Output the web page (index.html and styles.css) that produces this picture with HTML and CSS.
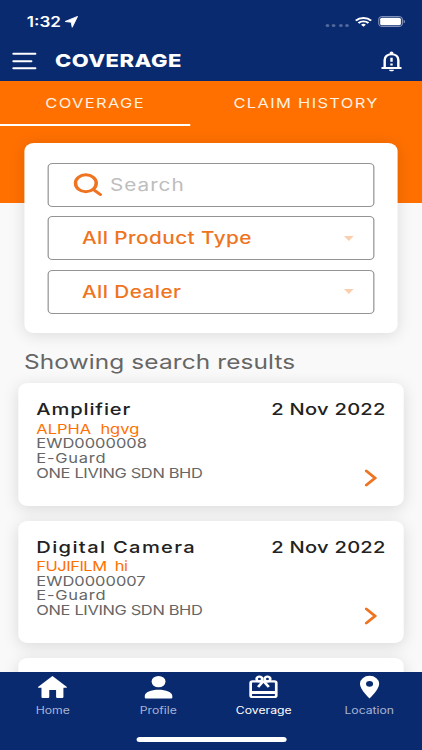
FILE: index.html
```html
<!DOCTYPE html>
<html lang="en">
<head>
  <meta charset="UTF-8">
  <meta name="viewport" content="width=device-width, initial-scale=1">
  <title>Coverage</title>
  <link rel="stylesheet" href="styles.css">
</head>
<body>
  <div class="screen">
    <header class="header">
      <div class="status">
        <span class="time">1:32</span>
        <svg class="arrow" width="11" height="12" viewBox="0 0 11 12"><path d="M10.6.4 6.2 11.3 5.4 6.2.4 5.5z" fill="#fff" stroke="#fff" stroke-width=".8" stroke-linejoin="round"/></svg>
        <span class="dots"><i></i><i></i><i></i><i></i></span>
        <svg class="wifi" width="14" height="10" viewBox="0 0 14 10" fill="none" stroke="#fff" stroke-width="1.9"><path d="M.7 3.6a9 9 0 0 1 12.6 0M2.9 6a6 6 0 0 1 8.2 0"/><path d="M7 9.8 5 7.7a3 3 0 0 1 4 0z" fill="#fff" stroke="none"/></svg>
        <svg class="battery" width="23" height="11" viewBox="0 0 23 11"><rect x=".5" y=".5" width="19.4" height="10" rx="3" fill="none" stroke="#7f8fb8"/><rect x="1.7" y="1.7" width="17" height="7.6" rx="1.6" fill="#fff"/><path d="M21 3.7c1.3.5 1.3 3.1 0 3.6z" fill="#9aa7c8"/></svg>
      </div>
      <div class="bar">
        <svg class="menu" width="20" height="18" viewBox="0 0 20 18" stroke="#fff" stroke-width="2" stroke-linecap="round"><path d="M1 1.8h18M1 9.200h14.6M1 16.200h18"/></svg>
        <h1>COVERAGE</h1>
        <svg class="bell" width="18" height="21" viewBox="0 0 18 21" fill="none" stroke="#fff" stroke-width="2"><path d="M3.4 16.6V9c0-3.6 2.4-5.8 5.6-5.8s5.6 2.200 5.6 5.8v7.6"/><path d="M.8 16.9h16.400" stroke-width="2"/><circle cx="9" cy="2" r="1.6" fill="#fff" stroke="none"/><path d="M7 18.7h4c0 2.1-4 2.1-4 0z" fill="#fff" stroke="none"/><path d="M9 6.7v4M9 12.4v2"/></svg>
      </div>
    </header>

    <nav class="tabs">
      <a class="tab active">COVERAGE</a>
      <a class="tab history">CLAIM HISTORY</a>
    </nav>

    <main class="content">
      <section class="filters">
        <div class="field">
          <svg class="search" width="24" height="24" viewBox="0 0 24 24" fill="none" stroke="#ee7421"><ellipse cx="10.400" cy="10.300" rx="8.500" ry="8.500" stroke-width="2.9"/><path d="m16.500 16.500 5.700 5" stroke-width="2.900" stroke-linecap="round"/></svg>
          <span class="placeholder">Search</span>
        </div>
        <div class="field select"><span class="product">All Product Type</span><i class="caret"></i></div>
        <div class="field select"><span class="dealer">All Dealer</span><i class="caret"></i></div>
      </section>

      <h2>Showing search results</h2>

      <article class="card">
        <div class="top"><h3 class="amp">Amplifier</h3><span class="date">2 Nov 2022</span></div>
        <p class="model">ALPHA&nbsp; hgvg</p>
        <p>EWD0000008</p>
        <p class="plan">E-Guard</p>
        <p class="dealer-name">ONE LIVING SDN BHD</p>
        <svg class="chevron" width="10" height="18" viewBox="0 0 10 18" fill="none" stroke="#ee7421" stroke-width="2.5" stroke-linecap="round"><path d="m1.300 1.800 7.300 7.200-7.300 7.200"/></svg>
      </article>

      <article class="card">
        <div class="top"><h3 class="camera">Digital Camera</h3><span class="date">2 Nov 2022</span></div>
        <p class="model fuji">FUJIFILM&nbsp; hi</p>
        <p>EWD0000007</p>
        <p class="plan">E-Guard</p>
        <p class="dealer-name">ONE LIVING SDN BHD</p>
        <svg class="chevron" width="10" height="18" viewBox="0 0 10 18" fill="none" stroke="#ee7421" stroke-width="2.5" stroke-linecap="round"><path d="m1.300 1.800 7.300 7.200-7.300 7.200"/></svg>
      </article>

      <article class="card"></article>
    </main>

    <footer class="bottom-nav">
      <div class="items">
        <a class="item">
          <svg width="24" height="24" viewBox="0 0 24 24" fill="#fff"><path d="m12 1 11.6 10.7c.5.5.2 1-.4 1H21V22q0 1-1 1h-4q-1 0-1-1v-7H9.400v7q0 1-1 1H4q-1 0-1-1v-9.300H.8c-.6 0-.9-.5-.4-1z"/></svg>
          <span>Home</span>
        </a>
        <a class="item">
          <svg width="24" height="24" viewBox="0 0 24 24" fill="#fff"><circle cx="12" cy="6.600" r="5.700"/><path d="M.7 21c0-3.800 5.300-6.200 11.300-6.200S23.300 17.200 23.300 21v1.400q0 1-1 1H1.700q-1 0-1-1z"/></svg>
          <span>Profile</span>
        </a>
        <a class="item active">
          <svg width="24" height="24" viewBox="0 0 24 24" fill="none" stroke="#fff" stroke-width="2.200"><rect x="1.500" y="6.400" width="21" height="15.600" rx="1.500"/><path d="M1.500 17.400h21" stroke-width="3"/><circle cx="8.700" cy="4" r="2.300"/><circle cx="15.300" cy="4" r="2.300"/><path d="M12 6 7.600 12M12 6l4.400 6"/></svg>
          <span>Coverage</span>
        </a>
        <a class="item">
          <svg width="24" height="24" viewBox="0 0 24 24" fill="#fff" fill-rule="evenodd"><path d="M12 .8a7.900 7.900 0 0 1 7.900 8c0 5.800-7.900 14.700-7.900 14.700S4.100 14.600 4.100 8.800a7.900 7.900 0 0 1 7.900-8zm0 5.100a2.900 2.900 0 1 0 0 5.800 2.900 2.900 0 0 0 0-5.800z"/></svg>
          <span>Location</span>
        </a>
      </div>
      <div class="home-bar"></div>
    </footer>
  </div>
</body>
</html>
```

FILE: styles.css
```css
* {
  box-sizing: border-box;
}
body {
  margin: 0;
  overflow: hidden;
  font-family: Inter, "Liberation Sans", sans-serif;
  color: #666;
}
h1, h2, h3, p {
  margin: 0;
}
svg {
  display: block;
  flex: none;
}
/* phone layout is 346px wide, widened to fill the window */
.screen {
  display: flex;
  flex-direction: column;
  width: 346px;
  height: 750px;
  overflow: hidden;
  background: #f9f9f9;
  transform: scaleX(1.21966);
  transform-origin: 0 0;
}

.header {
  height: 81px;
  flex: none;
  background: #0a2a70;
  color: #fff;
}
.status {
  display: flex;
  align-items: center;
  height: 42px;
  padding: 1px 13px 0 22px;
}
.time {
  width: 31px;
  font-size: 14px;
  font-weight: 600;
}
.dots {
  display: flex;
  gap: 2.5px;
  margin: 7px 5px 0 auto;
}
.dots i {
  width: 3px;
  height: 3px;
  border-radius: 50%;
  background: #53699b;
}
.battery {
  margin-left: 5px;
}
.bar {
  display: flex;
  align-items: center;
  height: 38px;
  padding: 0 16px 0 10px;
}
h1 {
  margin-left: 15px;
  margin-top: -2px;
  font-size: 18px;
  font-weight: 800;
  letter-spacing: 0.4px;
}
.bell {
  margin-left: auto;
}

.tabs {
  display: flex;
  flex: none;
  height: 122px;
  background: #ff7000;
}
.tab {
  width: 156px;
  height: 45px;
  padding-top: 14px;
  color: #fff2e2;
  font-size: 13.5px;
  line-height: 17px;
  letter-spacing: 1.1px;
  text-align: center;
}
.tab.active {
  border-bottom: 2px solid #fff;
}
.tab.history {
  width: 190px;
}

.content {
  flex: 1;
  min-height: 0;
  margin-top: -60px;
  padding: 0 14.8px;
}
.filters {
  display: flex;
  flex-direction: column;
  gap: 9.5px;
  height: 190px;
  margin: 0 4.9px;
  padding: 19.5px;
  border-radius: 8px;
  background: #fff;
  box-shadow: 0 2px 14px rgba(0, 0, 0, 0.12);
}
.field {
  display: flex;
  align-items: center;
  height: 44px;
  padding: 0 16px 0 20px;
  border: 1px solid #949494;
  border-radius: 4px;
  font-size: 17px;
}
.placeholder {
  margin-left: 6px;
  color: #bdbdbd;
  letter-spacing: 0.8px;
}
.select {
  padding-left: 27px;
  color: #ee7421;
  font-weight: 500;
}
.product {
  letter-spacing: 0.35px;
}
.dealer {
  letter-spacing: 0.35px;
}
.caret {
  margin-left: auto;
  border: 4.500px solid transparent;
  border-top: 5px solid #fbcfae;
  border-bottom: 0;
}
h2 {
  margin: 15px 4.900px 0;
  height: 35px;
  font-size: 20px;
  line-height: 29px;
  font-weight: 400;
  letter-spacing: 0.1px;
  white-space: nowrap;
}

.card {
  position: relative;
  height: 122.5px;
  margin-bottom: 15px;
  padding: 16px 15px;
  border-radius: 8px;
  background: #fff;
  box-shadow: 0 3px 14px rgba(0, 0, 0, 0.13);
  font-size: 13.5px;
  line-height: 14.7px;
}
.top {
  display: flex;
  justify-content: space-between;
  height: 22.500px;
  color: #222;
  font-size: 16.5px;
  line-height: 21px;
  font-weight: 500;
}
h3 {
  font-size: 16.5px;
  font-weight: 500;
}
.amp {
  letter-spacing: 0.7px;
}
.camera {
  letter-spacing: 1.1px;
}
.date {
  letter-spacing: 0.2px;
}
.model {
  color: #ff7000;
}
.fuji {
  letter-spacing: -0.4px;
}
.plan {
  letter-spacing: 0.6px;
}
.dealer-name {
  letter-spacing: -0.3px;
}
.chevron {
  position: absolute;
  right: 22px;
  bottom: 18.5px;
}

.bottom-nav {
  position: relative;
  flex: none;
  height: 78px;
  background: #0a2a70;
}
.items {
  display: flex;
  padding: 3px 0;
}
.item {
  display: flex;
  flex: 1;
  flex-direction: column;
  align-items: center;
  gap: 4px;
  color: #a8b4d3;
  font-size: 10px;
  line-height: 14px;
}
.item.active {
  color: #fff;
}
.home-bar {
  width: 123px;
  height: 4.5px;
  margin: 17px auto 0;
  border-radius: 3px;
  background: #fff;
}
```
